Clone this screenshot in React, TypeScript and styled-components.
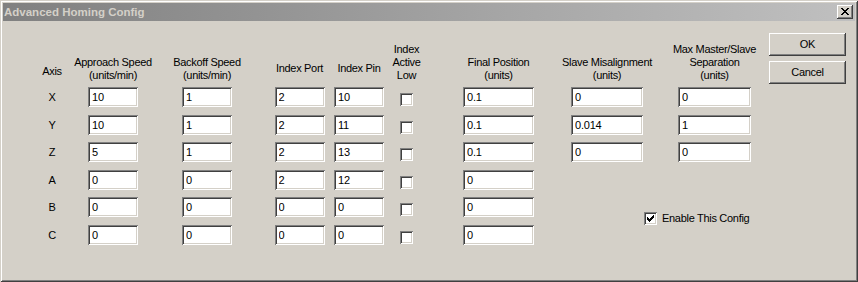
import React from "react";
import styled, { createGlobalStyle } from "styled-components";

const Global = createGlobalStyle`
  html, body { margin: 0; padding: 0; background: #d4d0c8; }
  body { font-family: "Liberation Sans", Arial, sans-serif; font-size: 11px; color: #000; letter-spacing: -0.3px; }
`;

const Window = styled.div`
  width: 858px;
  height: 282px;
  box-sizing: border-box;
  padding: 3px;
  background: #d4d0c8;
  box-shadow: inset 1px 1px #d4d0c8, inset -1px -1px #404040, inset 2px 2px #fff,
    inset -2px -2px #808080;
  display: flex;
  flex-direction: column;
`;

const TitleBar = styled.div`
  height: 18px;
  flex: none;
  display: flex;
  align-items: center;
  padding: 0 2px 0 1px;
  background: linear-gradient(to right, #808080, #c0c0c0);
  color: #d4d0c8;
  font-weight: bold;
  font-size: 11.5px;
  letter-spacing: 0;
`;

const Title = styled.span`
  padding-left: 0;
`;

const CloseButton = styled.div`
  margin-left: auto;
  width: 16px;
  height: 14px;
  box-sizing: border-box;
  background: #d4d0c8;
  box-shadow: inset -1px -1px #404040, inset 1px 1px #fff, inset -2px -2px #808080,
    inset 2px 2px #d4d0c8;
  display: flex;
  align-items: center;
  justify-content: center;
  padding-bottom: 1px;
`;

const Body = styled.div`
  display: flex;
  align-items: flex-start;
  padding: 12px 0 0 25px;
`;

const COLS = [48, 74, 114, 5, 61, 3, 52, 43, 141, 76, 25, 89];

const Table = styled.div`
  margin-top: 5px;
  display: grid;
  grid-template-columns: ${COLS.map((c) => `${c}px`).join(" ")};
  grid-template-rows: 49px repeat(6, 27.6px);
`;

const Header = styled.div<{ $col: number; $pb?: number }>`
  grid-row: 1;
  grid-column: ${(p) => p.$col};
  align-self: end;
  justify-self: center;
  text-align: center;
  white-space: nowrap;
  line-height: 13px;
  padding-bottom: ${(p) => p.$pb ?? 5}px;
`;

const AxisLabel = styled.div<{ $row: number }>`
  grid-row: ${(p) => p.$row};
  grid-column: 1;
  justify-self: center;
  align-self: start;
  line-height: 20px;
`;

const Field = styled.input<{ $row: number; $col: number; $w: number }>`
  grid-row: ${(p) => p.$row};
  grid-column: ${(p) => p.$col};
  justify-self: center;
  align-self: start;
  width: ${(p) => p.$w}px;
  height: 20px;
  box-sizing: border-box;
  margin: 0;
  border: none;
  outline: none;
  padding: 0 0 0 4px;
  background: #fff;
  font-family: "Liberation Sans", Arial, sans-serif;
  font-size: 11px;
  letter-spacing: -0.2px;
  color: #000;
  box-shadow: inset 1px 1px #808080, inset -1px -1px #fff, inset 2px 2px #404040,
    inset -2px -2px #d4d0c8;
`;

const CheckBox = styled.div`
  width: 13px;
  height: 13px;
  box-sizing: border-box;
  background: #fff;
  box-shadow: inset 1px 1px #808080, inset -1px -1px #fff, inset 2px 2px #404040,
    inset -2px -2px #d4d0c8;
  display: flex;
  align-items: center;
  justify-content: center;
`;

const CheckCell = styled.div<{ $row: number }>`
  grid-row: ${(p) => p.$row};
  grid-column: 8;
  justify-self: center;
  align-self: start;
  margin-top: 6px;
`;

const EnableRow = styled.label`
  grid-row: 6;
  grid-column: 10 / 13;
  justify-self: start;
  align-self: start;
  margin-left: 75px;
  margin-top: 15px;
  display: flex;
  align-items: center;
  gap: 5px;
  line-height: 13px;
  white-space: nowrap;
`;

const Buttons = styled.div`
  margin-left: 10px;
  display: flex;
  flex-direction: column;
  gap: 5px;
`;

const Button = styled.div`
  width: 77px;
  height: 23px;
  box-sizing: border-box;
  background: #d4d0c8;
  box-shadow: inset -1px -1px #404040, inset 1px 1px #fff, inset -2px -2px #808080,
    inset 2px 2px #d4d0c8;
  display: flex;
  align-items: center;
  justify-content: center;
  padding-bottom: 1px;
`;

const CloseGlyph = () => (
  <svg width="8" height="7" viewBox="0 0 8 7" shapeRendering="crispEdges">
    {[
      [0, 6],
      [1, 5],
      [2, 4],
      [3, 3],
      [4, 2],
      [5, 1],
      [6, 0],
    ].map(([a, b], i) =>
      a === b ? (
        <rect key={i} x={3} y={i} width={2} height={1} fill="#000" />
      ) : (
        <g key={i}>
          <rect x={Math.min(a, b)} y={i} width={2} height={1} fill="#000" />
          <rect x={Math.max(a, b)} y={i} width={2} height={1} fill="#000" />
        </g>
      )
    )}
  </svg>
);

const CheckMark = () => (
  <svg width="7" height="7" viewBox="0 0 7 7" shapeRendering="crispEdges">
    <rect x="0" y="2" width="1" height="3" fill="#000" />
    <rect x="1" y="3" width="1" height="3" fill="#000" />
    <rect x="2" y="4" width="1" height="3" fill="#000" />
    <rect x="3" y="3" width="1" height="3" fill="#000" />
    <rect x="4" y="2" width="1" height="3" fill="#000" />
    <rect x="5" y="1" width="1" height="3" fill="#000" />
    <rect x="6" y="0" width="1" height="3" fill="#000" />
  </svg>
);

type Row = {
  axis: string;
  approach: string;
  backoff: string;
  port: string;
  pin: string;
  final: string;
  slave?: string;
  max?: string;
};

const rows: Row[] = [
  { axis: "X", approach: "10", backoff: "1", port: "2", pin: "10", final: "0.1", slave: "0", max: "0" },
  { axis: "Y", approach: "10", backoff: "1", port: "2", pin: "11", final: "0.1", slave: "0.014", max: "1" },
  { axis: "Z", approach: "5", backoff: "1", port: "2", pin: "13", final: "0.1", slave: "0", max: "0" },
  { axis: "A", approach: "0", backoff: "0", port: "2", pin: "12", final: "0" },
  { axis: "B", approach: "0", backoff: "0", port: "0", pin: "0", final: "0" },
  { axis: "C", approach: "0", backoff: "0", port: "0", pin: "0", final: "0" },
];

export default function App() {
  return (
    <>
      <Global />
      <Window>
        <TitleBar>
          <Title>Advanced Homing Config</Title>
          <CloseButton>
            <CloseGlyph />
          </CloseButton>
        </TitleBar>
        <Body>
          <Table>
            <Header $col={1} $pb={9}>Axis</Header>
            <Header $col={2}>
              Approach Speed
              <br />
              (units/min)
            </Header>
            <Header $col={3}>
              Backoff Speed
              <br />
              (units/min)
            </Header>
            <Header $col={5} $pb={12}>Index Port</Header>
            <Header $col={7} $pb={12}>Index Pin</Header>
            <Header $col={8}>
              Index
              <br />
              Active
              <br />
              Low
            </Header>
            <Header $col={9}>
              Final Position
              <br />
              (units)
            </Header>
            <Header $col={10}>
              Slave Misalignment
              <br />
              (units)
            </Header>
            <Header $col={12}>
              Max Master/Slave
              <br />
              Separation
              <br />
              (units)
            </Header>
            {rows.map((r, i) => {
              const row = i + 2;
              return (
                <React.Fragment key={r.axis}>
                  <AxisLabel $row={row}>{r.axis}</AxisLabel>
                  <Field $row={row} $col={2} $w={50} value={r.approach} readOnly />
                  <Field $row={row} $col={3} $w={50} value={r.backoff} readOnly />
                  <Field $row={row} $col={5} $w={50} value={r.port} readOnly />
                  <Field $row={row} $col={7} $w={50} value={r.pin} readOnly />
                  <CheckCell $row={row}>
                    <CheckBox />
                  </CheckCell>
                  <Field $row={row} $col={9} $w={71} value={r.final} readOnly />
                  {r.slave !== undefined && (
                    <Field $row={row} $col={10} $w={72} value={r.slave} readOnly />
                  )}
                  {r.max !== undefined && (
                    <Field $row={row} $col={12} $w={73} value={r.max} readOnly />
                  )}
                </React.Fragment>
              );
            })}
            <EnableRow>
              <CheckBox>
                <CheckMark />
              </CheckBox>
              Enable This Config
            </EnableRow>
          </Table>
          <Buttons>
            <Button>OK</Button>
            <Button>Cancel</Button>
          </Buttons>
        </Body>
      </Window>
    </>
  );
}
